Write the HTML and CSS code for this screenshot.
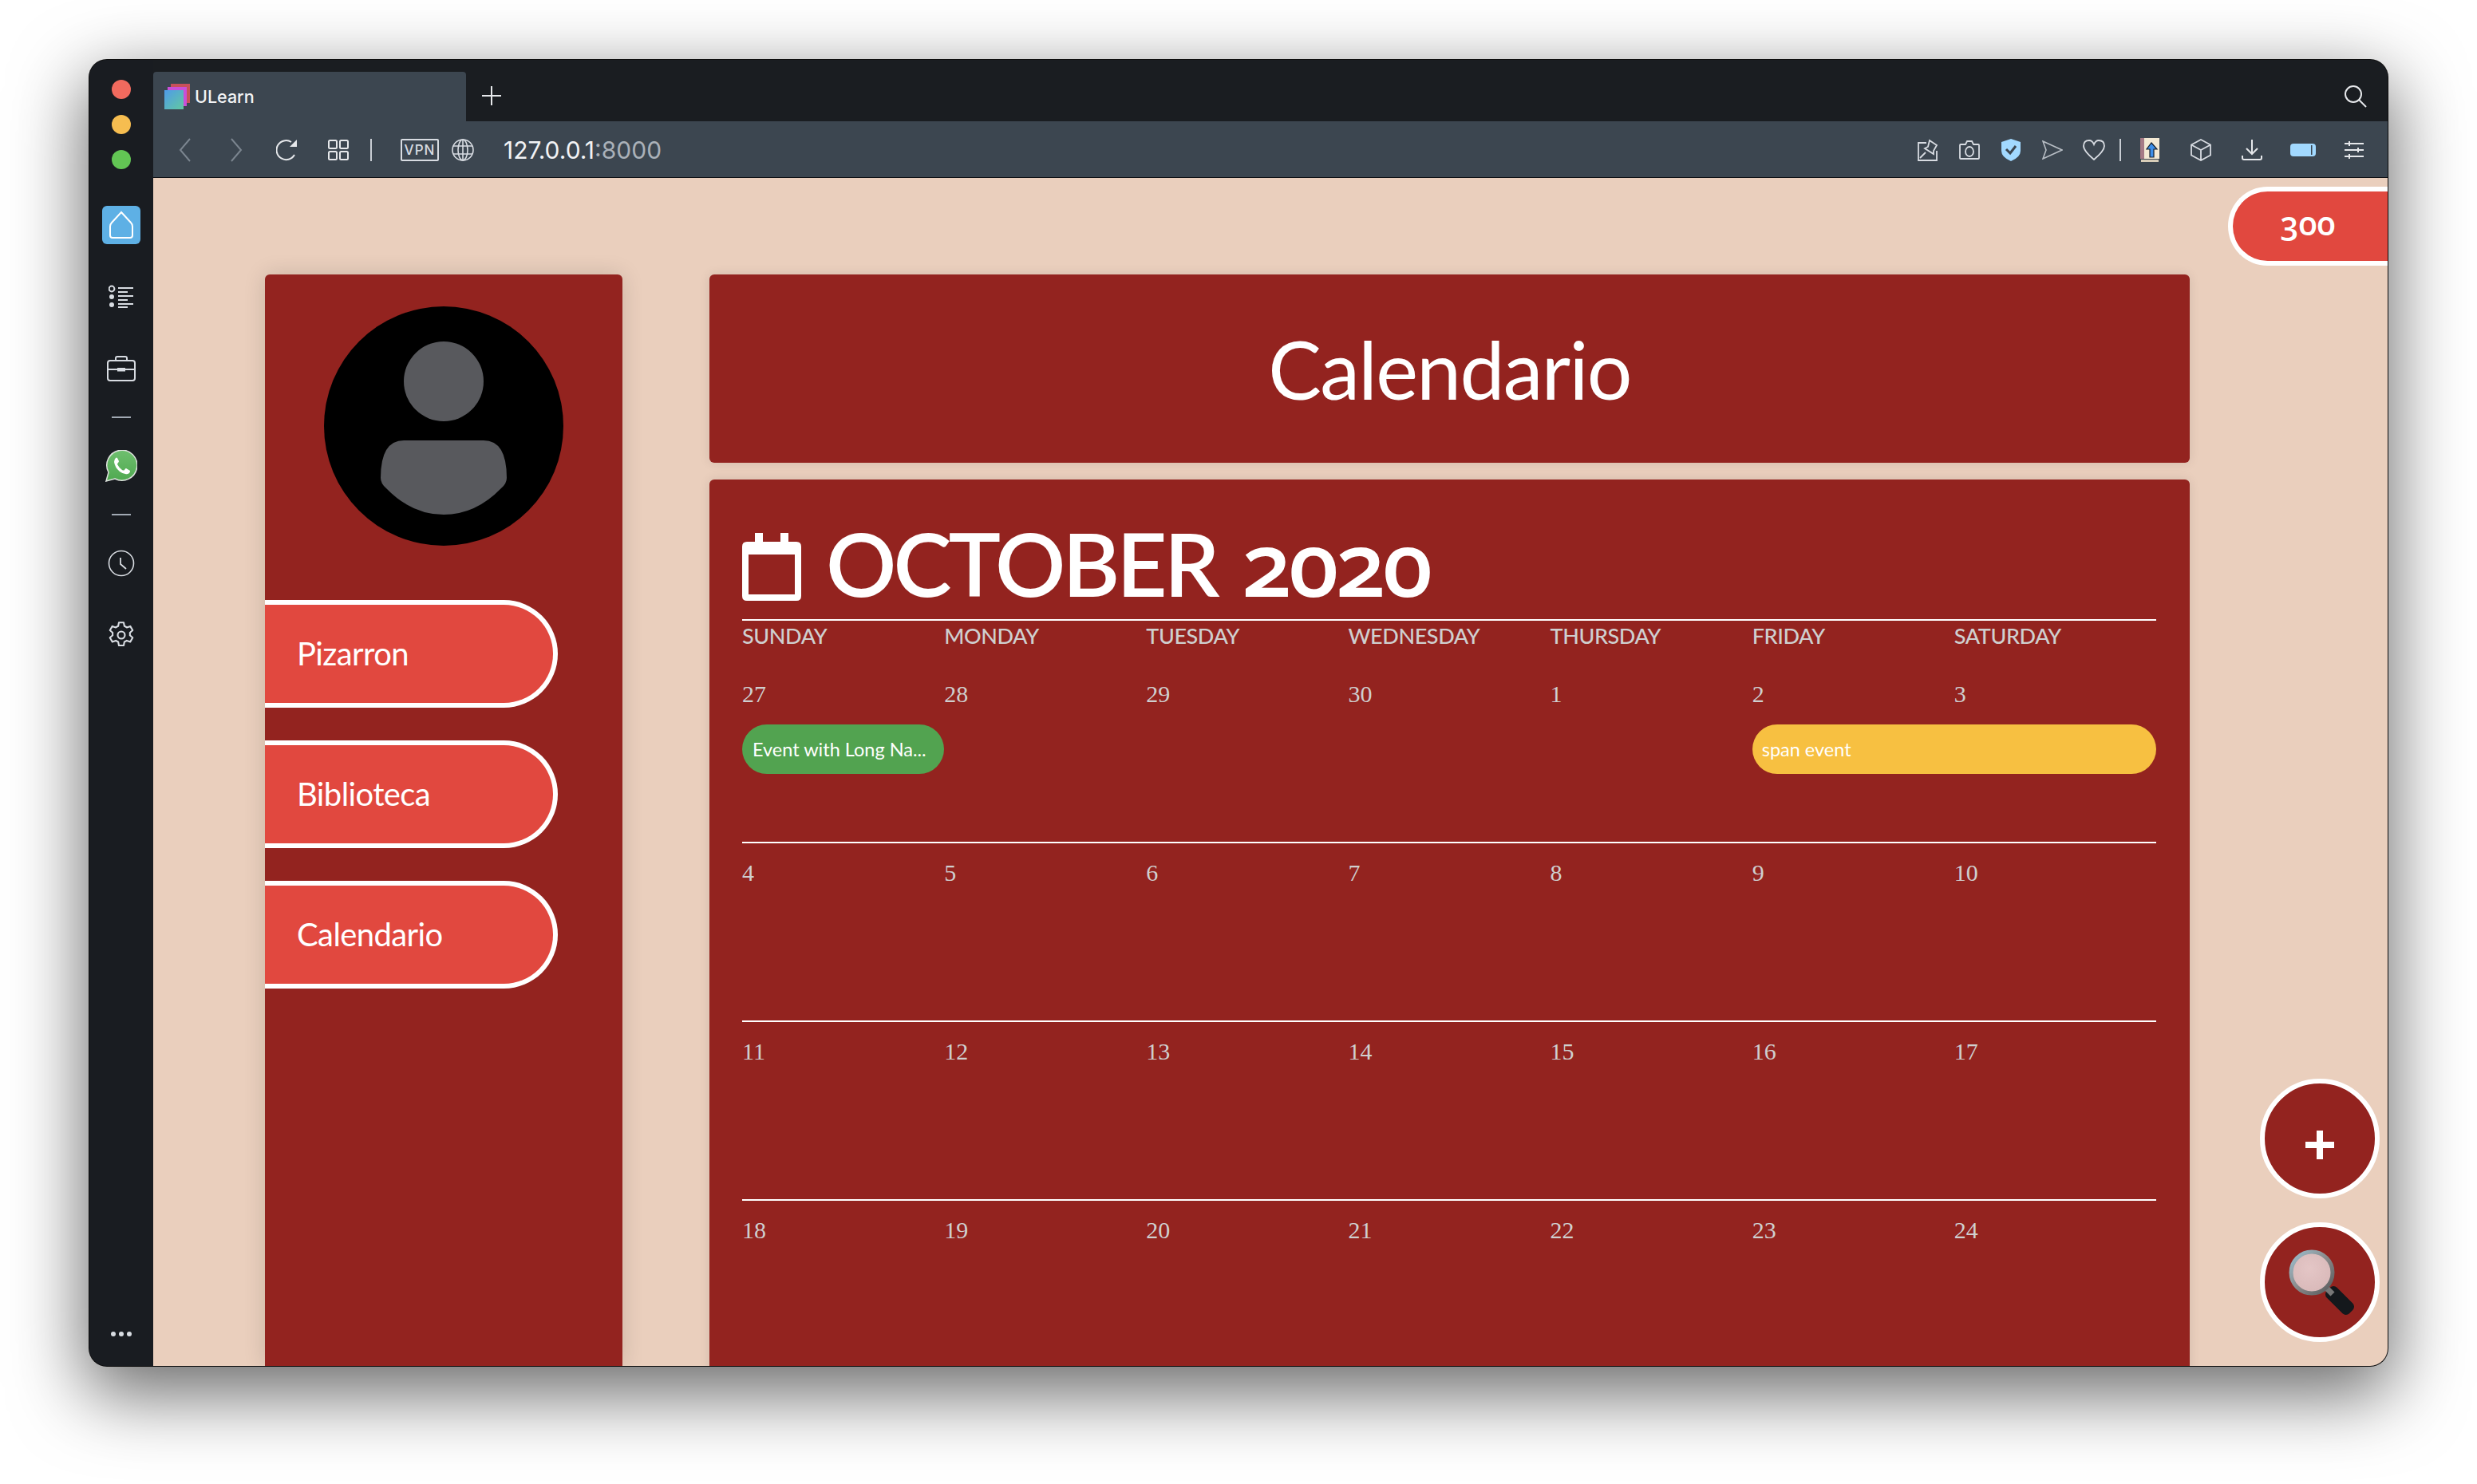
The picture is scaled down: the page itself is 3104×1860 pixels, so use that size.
FILE: index.html
```html
<!DOCTYPE html>
<html lang="es">
<head>
  <meta charset="UTF-8">
  <title>ULearn</title>
  <link rel="stylesheet" href="styles.css">
</head>
<body>
<div class="window">

  <!-- left rail of the browser -->
  <aside class="rail">
    <div class="lights">
      <span class="light red"></span>
      <span class="light yellow"></span>
      <span class="light green"></span>
    </div>
    <div class="rail-item">
      <span class="home-btn">
        <svg width="32" height="36" viewBox="0 0 32 36" fill="none" stroke="#fff" stroke-width="2"><path d="M16 2 L28 15 Q30 17 30 20 V31 Q30 34 27 34 H5 Q2 34 2 31 V20 Q2 17 4 15 Z"/></svg>
      </span>
    </div>
    <div class="rail-item">
      <svg width="32" height="30" viewBox="0 0 32 30" fill="#d8dce2" stroke="none"><circle cx="4" cy="5" r="3.4" fill="none" stroke="#d8dce2" stroke-width="2"/><circle cx="4" cy="15" r="3"/><circle cx="4" cy="25" r="3"/><rect x="12" y="3" width="19" height="2"/><rect x="12" y="8" width="12" height="2"/><rect x="12" y="13" width="19" height="2"/><rect x="12" y="18" width="12" height="2"/><rect x="12" y="23" width="19" height="2"/><rect x="12" y="27" width="12" height="2"/></svg>
    </div>
    <div class="rail-item">
      <svg width="38" height="34" viewBox="0 0 38 34" fill="none" stroke="#d8dce2" stroke-width="2"><rect x="2" y="7" width="34" height="25" rx="3"/><path d="M12 7 V4 Q12 2 14 2 H24 Q26 2 26 4 V7"/><path d="M2 18 H36"/><rect x="15" y="17" width="8" height="2.5" fill="#d8dce2"/></svg>
    </div>
    <div class="rail-sep"></div>
    <div class="rail-item">
      <svg width="40" height="40" viewBox="0 0 40 40"><defs><linearGradient id="wa" x1="0" y1="0" x2="0" y2="1"><stop offset="0" stop-color="#6fbf6f"/><stop offset="1" stop-color="#4fa950"/></linearGradient></defs><path d="M1 39 L4 28 A19 19 0 1 1 12 36 Z" fill="url(#wa)" stroke="#dfe3df" stroke-width="1.5"/><path d="M13 10 Q11 12 11 15 Q12 22 18 27 Q23 31 28 30 Q31 29 31 26 L26 23 Q25 23 24 25 Q23 26 21 25 Q17 22 15 18 Q15 17 16 16 Q17 15 17 14 L15 10 Q14 9 13 10 Z" fill="#fff"/></svg>
    </div>
    <div class="rail-sep"></div>
    <div class="rail-item">
      <svg width="34" height="34" viewBox="0 0 34 34" fill="none" stroke="#d8dce2" stroke-width="1.6"><circle cx="17" cy="17" r="15.5"/><path d="M16 10 V18 L23 24" stroke-width="1.8"/></svg>
    </div>
    <div class="rail-item">
      <svg width="36" height="36" viewBox="0 0 24 24" fill="none" stroke="#d8dce2" stroke-width="1.4" stroke-linejoin="round"><circle cx="12" cy="12" r="3"/><path d="M10 1.5 h4 l.6 3 a8 8 0 0 1 2 1.1 l2.9-1 2 3.4-2.3 2 a8 8 0 0 1 0 2.2 l2.3 2-2 3.4-2.9-1 a8 8 0 0 1-2 1.1 l-.6 3 h-4 l-.6-3 a8 8 0 0 1-2-1.1 l-2.9 1-2-3.4 2.3-2 a8 8 0 0 1 0-2.2 l-2.3-2 2-3.4 2.9 1 a8 8 0 0 1 2-1.1 z"/></svg>
    </div>
    <div class="rail-more"><span></span><span></span><span></span></div>
  </aside>

  <div class="browser">
    <!-- tabs -->
    <div class="tabbar">
      <div class="tab">
        <svg class="favicon" width="32" height="32" viewBox="0 0 32 32"><defs><linearGradient id="fav" x1="0" y1="0" x2="1" y2="1"><stop offset="0" stop-color="#4f9be8"/><stop offset="1" stop-color="#62c9a0"/></linearGradient></defs><rect x="8" y="0" width="24" height="24" fill="#c8505a"/><rect x="4" y="4" width="24" height="24" fill="#c94fd8"/><rect x="0" y="8" width="24" height="24" fill="url(#fav)"/></svg>
        <span class="tab-title">ULearn</span>
      </div>
      <svg class="new-tab" width="26" height="26" viewBox="0 0 26 26" stroke="#e6e8eb" stroke-width="2"><path d="M13 1 V25 M1 13 H25"/></svg>
      <svg class="tab-search" width="30" height="30" viewBox="0 0 30 30" fill="none" stroke="#e6e8eb" stroke-width="2"><circle cx="12" cy="12" r="10"/><path d="M19 19 L28 28"/></svg>
    </div>

    <!-- address bar -->
    <div class="toolbar">
      <div class="bar-left">
        <span class="slot"><svg width="16" height="30" viewBox="0 0 16 30" fill="none" stroke="#7b858f" stroke-width="2"><path d="M14 1 L2 15 L14 29"/></svg></span>
        <span class="slot"><svg width="16" height="30" viewBox="0 0 16 30" fill="none" stroke="#7b858f" stroke-width="2"><path d="M2 1 L14 15 L2 29"/></svg></span>
        <span class="slot"><svg width="28" height="28" viewBox="0 0 28 28" fill="none" stroke="#e6e8eb" stroke-width="2"><path d="M23 20 A12 12 0 1 1 19 4"/><path d="M26 1 V10 H17 Z" fill="#e6e8eb" stroke="none"/></svg></span>
        <span class="slot"><svg width="26" height="26" viewBox="0 0 26 26" fill="none" stroke="#e6e8eb" stroke-width="2"><rect x="1" y="1" width="10" height="10" rx="1.5"/><rect x="15" y="1" width="10" height="10" rx="1.5"/><rect x="1" y="15" width="10" height="10" rx="1.5"/><rect x="15" y="15" width="10" height="10" rx="1.5"/></svg></span>
        <span class="bar-sep first-sep"></span>
        <span class="vpn">VPN</span>
        <svg class="globe" width="28" height="28" viewBox="0 0 28 28" fill="none" stroke="#d8dce2" stroke-width="1.6"><circle cx="14" cy="14" r="13"/><ellipse cx="14" cy="14" rx="6" ry="13"/><path d="M14 1 V27 M2 9 H26 M2 19 H26"/></svg>
        <span class="url">127.0.0.1<span class="port">:8000</span></span>
      </div>
      <div class="bar-right">
        <span class="slot-sm"><svg width="26" height="28" viewBox="0 0 26 28" fill="none" stroke="#d8dce2" stroke-width="1.8"><path d="M11 5 H1 V27 H24 V15"/><path d="M3 24 L10 17 M15 2 L24 8 L20 15 L20 19 L9 12 L13 10 Z"/></svg></span>
        <span class="slot-sm"><svg width="26" height="24" viewBox="0 0 26 24" fill="none" stroke="#d8dce2" stroke-width="1.8"><path d="M2 5 H8 L10 1 H16 L18 5 H24 Q25 5 25 6 V22 Q25 23 24 23 H2 Q1 23 1 22 V6 Q1 5 2 5 Z"/><ellipse cx="13" cy="14" rx="5" ry="6"/></svg></span>
        <span class="slot-sm"><svg width="24" height="28" viewBox="0 0 24 28"><path d="M12 0 L24 4 V15 Q24 23 12 28 Q0 23 0 15 V4 Z" fill="#a2d9ff"/><path d="M6 13 L11 18 L18 9" fill="none" stroke="#3c4650" stroke-width="3"/></svg></span>
        <span class="slot-sm"><svg width="26" height="24" viewBox="0 0 26 24" fill="none" stroke="#b8bec5" stroke-width="1.6"><path d="M1 1 L25 12 L1 23 L5 12 Z"/></svg></span>
        <span class="slot-sm"><svg width="28" height="26" viewBox="0 0 28 26" fill="none" stroke="#d8dce2" stroke-width="1.8"><path d="M14 25 Q1 14 1 8 Q1 1 8 1 Q12 1 14 6 Q16 1 20 1 Q27 1 27 8 Q27 14 14 25 Z"/></svg></span>
        <span class="bar-sep"></span>
        <span class="slot"><svg width="24" height="30" viewBox="0 0 24 30"><rect x="0" y="0" width="24" height="26" fill="#f3e9d4"/><rect x="0" y="0" width="5" height="26" fill="#a57a86"/><rect x="1" y="27" width="22" height="3" fill="#d8cdb8"/><path d="M14 6 L21 14 H17 V24 H12 V14 H8 Z" fill="#3d8ee8" stroke="#16202c" stroke-width="1.2"/></svg></span>
        <span class="slot"><svg width="26" height="28" viewBox="0 0 26 28" fill="none" stroke="#d8dce2" stroke-width="1.8"><path d="M13 1 L25 7.5 V20.5 L13 27 L1 20.5 V7.5 Z M1 7.5 L13 14 L25 7.5 M13 14 V27"/></svg></span>
        <span class="slot"><svg width="26" height="26" viewBox="0 0 26 26" fill="none" stroke="#e6e8eb" stroke-width="2"><path d="M13 0 V18 M6 11 L13 18 L20 11 M1 20 V23 Q1 25 3 25 H23 Q25 25 25 23 V20"/></svg></span>
        <span class="slot"><svg width="32" height="16" viewBox="0 0 32 16"><rect x="0" y="0" width="32" height="16" rx="4" fill="#a2d9ff"/><rect x="26" y="2" width="1.5" height="12" fill="#3c4650"/></svg></span>
        <span class="slot"><svg width="24" height="22" viewBox="0 0 24 22" stroke="#e6e8eb" stroke-width="2"><path d="M0 3 H24 M0 11 H24 M0 19 H24 M6 0 V6 M17 8 V14 M6 16 V22"/></svg></span>
      </div>
    </div>

    <!-- the page itself -->
    <main class="page">
      <nav class="side-card">
        <svg class="avatar" width="300" height="300" viewBox="0 0 300 300"><circle cx="150" cy="150" r="150" fill="#000"/><circle cx="150" cy="94" r="50" fill="#58595d"/><path d="M100 168 H200 Q229 168 229 215 Q229 222 222 228 Q190 261 150 261 Q110 261 78 228 Q71 222 71 215 Q71 168 100 168 Z" fill="#58595d"/></svg>
        <ul class="menu">
          <li><a href="#">Pizarron</a></li>
          <li><a href="#">Biblioteca</a></li>
          <li><a href="#">Calendario</a></li>
        </ul>
      </nav>

      <section class="content">
        <header class="title-card">
          <h1>Calendario</h1>
        </header>
        <div class="calendar-card">
          <div class="month">
            <svg class="month-icon" width="74" height="85" viewBox="0 0 74 85"><path d="M16 0 H26 V11 H48 V0 H58 V11 H68 Q74 11 74 17 V79 Q74 85 68 85 H6 Q0 85 0 79 V17 Q0 11 6 11 H16 Z M8 27 V77 H66 V27 Z" fill="#fff" fill-rule="evenodd"/></svg>
            <h2>OCTOBER <span class="year">2020</span></h2>
          </div>
          <div class="weekdays">
            <span>SUNDAY</span><span>MONDAY</span><span>TUESDAY</span><span>WEDNESDAY</span><span>THURSDAY</span><span>FRIDAY</span><span>SATURDAY</span>
          </div>
          <div class="week">
            <span>27</span><span>28</span><span>29</span><span>30</span><span>1</span><span>2</span><span>3</span>
            <a class="event green" href="#">Event with Long Na...</a>
            <a class="event yellow" href="#">span event</a>
          </div>
          <div class="week ruled">
            <span>4</span><span>5</span><span>6</span><span>7</span><span>8</span><span>9</span><span>10</span>
          </div>
          <div class="week ruled">
            <span>11</span><span>12</span><span>13</span><span>14</span><span>15</span><span>16</span><span>17</span>
          </div>
          <div class="week ruled">
            <span>18</span><span>19</span><span>20</span><span>21</span><span>22</span><span>23</span><span>24</span>
          </div>
        </div>
      </section>

      <!-- floating things over the page -->
      <div class="points">300</div>
      <a class="fab fab-add" href="#">
        <svg width="36" height="36" viewBox="0 0 36 36" fill="#fff"><rect x="14" y="0" width="8" height="36"/><rect x="0" y="14" width="36" height="8"/></svg>
      </a>
      <a class="fab fab-search" href="#">
        <svg width="84" height="84" viewBox="0 0 84 84"><defs><radialGradient id="lens" cx=".45" cy=".4" r=".6"><stop offset="0" stop-color="#e4c6c6"/><stop offset="1" stop-color="#d9b9b9"/></radialGradient><linearGradient id="ring" x1="0" y1="0" x2="1" y2="1"><stop offset="0" stop-color="#9cc0d0"/><stop offset=".5" stop-color="#8a8a8a"/><stop offset="1" stop-color="#55585a"/></linearGradient></defs><rect x="56" y="44" width="18" height="40" rx="6" transform="rotate(-45 65 64)" fill="#14181c"/><path d="M48 48 L56 56" stroke="#777" stroke-width="7"/><circle cx="30" cy="29" r="26" fill="url(#lens)" stroke="url(#ring)" stroke-width="5"/></svg>
      </a>
    </main>
  </div>
</div>
</body>
</html>
```

FILE: styles.css
```css
* {
    box-sizing: border-box;
}

html, body {
    margin: 0;
    height: 100%;
}

body {
    background: #fff;
    padding: 75px 112px 0;
    font-family: "Lato", "Open Sans", sans-serif;
    overflow: hidden;
}

ul {
    list-style: none;
    margin: 0;
    padding: 0;
}

a {
    color: inherit;
    text-decoration: none;
}

/******************* window *******************/

.window {
    display: flex;
    width: 2880px;
    height: 1637px;
    border-radius: 22px;
    overflow: hidden;
    background: #191c21;
    box-shadow: 0 30px 90px 6px rgba(0, 0, 0, .58), 0 0 0 1px #111;
}

/******************* rail *******************/

.rail {
    display: flex;
    flex-direction: column;
    align-items: center;
    width: 80px;
    flex: none;
    padding-top: 25px;
    background: #191c21;
}

.lights {
    display: flex;
    flex-direction: column;
    gap: 20px;
    margin-bottom: 25px;
}

.light {
    display: block;
    width: 24px;
    height: 24px;
    border-radius: 50%;
}

.light.red { background: #f16a5e; }
.light.yellow { background: #f6bd50; }
.light.green { background: #62c554; }

.rail-item {
    display: flex;
    align-items: center;
    justify-content: center;
    height: 90px;
}

.home-btn {
    display: flex;
    align-items: center;
    justify-content: center;
    width: 48px;
    height: 48px;
    border-radius: 6px;
    background: #5eb0e5;
}

.rail-sep {
    width: 24px;
    height: 32px;
    background: linear-gradient(#a1a9b3, #a1a9b3) center / 24px 2px no-repeat;
}

.rail-more {
    display: flex;
    gap: 4px;
    margin-top: auto;
    margin-bottom: 37px;
}

.rail-more span {
    width: 6px;
    height: 6px;
    border-radius: 50%;
    background: #d8dce2;
}

/******************* tabs + address bar *******************/

.browser {
    display: flex;
    flex-direction: column;
    flex: 1;
    min-width: 0;
}

.tabbar {
    display: flex;
    align-items: flex-end;
    height: 77px;
    flex: none;
    background: #1a1d21;
}

.tab {
    display: flex;
    align-items: center;
    gap: 6px;
    width: 392px;
    height: 62px;
    padding-left: 14px;
    border-radius: 4px 4px 0 0;
    background: #3c4650;
}

.tab-title {
    color: #f2f3f5;
    font: 500 21.5px "Inter", sans-serif;
}

.new-tab {
    margin: 0 0 19px 19px;
}

.tab-search {
    margin: 0 25px 16px auto;
}

.toolbar {
    display: flex;
    align-items: center;
    justify-content: space-between;
    height: 71px;
    flex: none;
    padding: 1px 10px 0 8px;
    background: #3c4650;
    border-bottom: 1px solid #0f1114;
}

.bar-left, .bar-right {
    display: flex;
    align-items: center;
}

.slot, .slot-sm {
    display: flex;
    align-items: center;
    justify-content: center;
    width: 64px;
    height: 40px;
}

.slot-sm {
    width: 52px;
}

.bar-sep {
    width: 2px;
    height: 28px;
    margin: 0 4px 0 6px;
    background: #c9ced4;
}

.first-sep {
    margin: 0 36px 0 8px;
}

.vpn {
    width: 48px;
    height: 28px;
    border: 2px solid #d8dce2;
    border-radius: 2px;
    color: #d8dce2;
    font: 500 17px/24px "Inter", sans-serif;
    letter-spacing: 1px;
    text-align: center;
}

.globe {
    margin-left: 16px;
}

.url {
    margin-left: 37px;
    color: #f2f3f5;
    font: 400 30px "Inter", sans-serif;
}

.port {
    color: #aab1b9;
}

/******************* page *******************/

.page {
    position: relative;
    display: flex;
    flex: 1;
    min-height: 0;
    padding: 121px 0 0 140px;
    overflow: hidden;
    background: #eacfbd;
}

.side-card {
    width: 448px;
    flex: none;
    padding-top: 40px;
    border-radius: 6px 6px 0 0;
    background: #93231f;
    box-shadow: 0 0 28px rgba(0, 0, 0, .14);
}

.avatar {
    display: block;
    margin: 0 0 0 74px;
}

.menu {
    margin-top: 68px;
}

.menu li {
    margin-bottom: 41px;
}

.menu a {
    display: block;
    width: 367px;
    height: 135px;
    padding-left: 40px;
    border: 6px solid #fff;
    border-left: 0;
    border-radius: 0 68px 68px 0;
    background: #e1483f;
    color: #fff;
    font-size: 40px;
    letter-spacing: -.6px;
    line-height: 123px;
}

.content {
    display: flex;
    flex-direction: column;
    gap: 21px;
    width: 1855px;
    flex: none;
    margin-left: 109px;
}

.title-card {
    height: 236px;
    flex: none;
    border-radius: 6px;
    background: #93231f;
    box-shadow: 0 0 14px rgba(0, 0, 0, .1);
}

.title-card h1 {
    margin: 0;
    color: #fff;
    font-size: 100px;
    font-weight: 400;
    letter-spacing: -1.7px;
    line-height: 236px;
    text-align: center;
}

.calendar-card {
    flex: 1;
    padding: 0 42px 0 41px;
    border-radius: 6px 6px 0 0;
    background: #93231f;
    box-shadow: 0 0 14px rgba(0, 0, 0, .1);
}

/******************* calendar *******************/

.month {
    display: flex;
    align-items: flex-start;
    gap: 31px;
    height: 177px;
    padding-top: 67px;
    border-bottom: 2px solid #fff;
}

.month h2 {
    margin: -29px 0 0;
    color: #fff;
    font-size: 110px;
    font-weight: 600;
    letter-spacing: -4px;
    line-height: 132px;
    white-space: nowrap;
}

.year {
    margin-left: 8px;
    font-family: "Open Sans", sans-serif;
    font-size: 112px;
    font-variant-numeric: oldstyle-nums;
    font-weight: 600;
}

.weekdays, .week {
    display: grid;
    grid-template-columns: repeat(7, 1fr);
    color: #cfcfcf;
}

.weekdays {
    height: 55px;
    font-size: 27px;
    font-weight: 500;
    letter-spacing: -.4px;
    line-height: 38px;
}

.week {
    grid-template-rows: 75px 62px;
    height: 224px;
    font: 30px/74px "Liberation Serif", serif;
}

.weekdays + .week {
    height: 222px;
}

.week.ruled {
    border-top: 2px solid #fff;
}

.event {
    grid-row: 2;
    height: 62px;
    border-radius: 31px;
    color: #fff;
    font: 23.5px/62px "Lato", sans-serif;
    white-space: nowrap;
}

.event.green {
    grid-column: 1 / 2;
    padding-left: 13px;
    background: #52a350;
}

.event.yellow {
    grid-column: 6 / 8;
    padding-left: 12px;
    background: #f7c041;
}

/******************* floating *******************/

.points {
    position: absolute;
    top: 11px;
    right: 0;
    width: 200px;
    height: 99px;
    padding-right: 6px;
    border: 6px solid #fff;
    border-right: 0;
    border-radius: 50px 0 0 50px;
    background: #e1483f;
    color: #fff;
    font: 600 41px/79px "Open Sans", sans-serif;
    font-variant-numeric: oldstyle-nums;
    text-align: center;
}

.fab {
    position: absolute;
    right: 10px;
    display: flex;
    align-items: center;
    justify-content: center;
    width: 150px;
    height: 150px;
    border: 6px solid #fff;
    border-radius: 50%;
    background: #93231f;
}

.fab-add {
    top: 1129px;
}

.fab-add svg {
    margin-top: 16px;
}

.fab-search {
    top: 1309px;
}

.fab-search svg {
    margin: 2px 0 0 4px;
}
```
